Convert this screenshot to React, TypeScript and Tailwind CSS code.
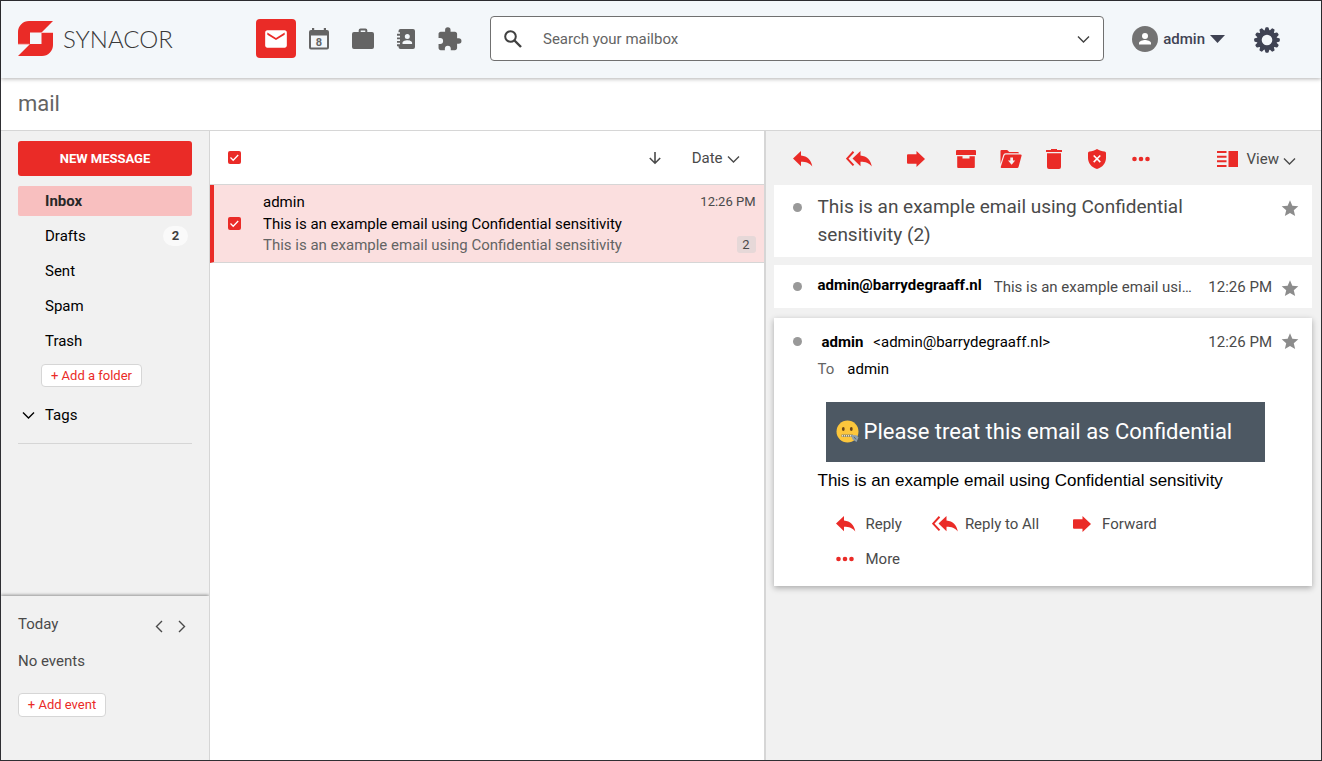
import { useState } from "react";
import type { ReactNode } from "react";
import { MdEmail, MdStar } from "react-icons/md";

const RED = "#ea2b27";

function LogoMark() {
  return (
    <svg width="35" height="35" viewBox="0 0 35 35" aria-hidden="true">
      <path
        fill={RED}
        fillRule="evenodd"
        d="M11 0H35L23.5 11.5H35V24A11 11 0 0 1 24 35H0L11.500 23.500H0V11A11 11 0 0 1 11 0ZM12 11.500V23H23.500V11.500Z"
      />
      <path d="M23.500 11.500H35M0 23.300H11.500" stroke="#fbd5d4" strokeWidth=".8" />
    </svg>
  );
}

function CalendarIcon() {
  return (
    <svg width="22" height="24" viewBox="0 0 22 24" aria-hidden="true">
      <path
        fill="#646464"
        fillRule="evenodd"
        d="M4 1h2.200v2h9.600V1H18v2h1a2 2 0 0 1 2 2v15.500a2 2 0 0 1-2 2H3a2 2 0 0 1-2-2V5a2 2 0 0 1 2-2h1ZM3 8.500v12h16v-12Z"
      />
      <text x="11" y="18.500" textAnchor="middle" fontFamily="Roboto, sans-serif" fontWeight="700" fontSize="11" fill="#646464">
        8
      </text>
    </svg>
  );
}

function BriefcaseIcon() {
  return (
    <svg width="24" height="24" viewBox="0 0 24 24" aria-hidden="true">
      <path
        fill="#646464"
        fillRule="evenodd"
        d="M9.500 1.500h5A1.800 1.800 0 0 1 16.300 3.300V5H21a2 2 0 0 1 2 2v13a2 2 0 0 1-2 2H3a2 2 0 0 1-2-2V7a2 2 0 0 1 2-2h4.700V3.300A1.800 1.800 0 0 1 9.500 1.500ZM9.700 3.500V5h4.600V3.500Z"
      />
    </svg>
  );
}

function ContactsIcon() {
  return (
    <svg width="20" height="22" viewBox="0 0 20 22" aria-hidden="true">
      <path
        fill="#646464"
        fillRule="evenodd"
        d="M4.500 1H17a2 2 0 0 1 2 2v16a2 2 0 0 1-2 2H4.500a2 2 0 0 1-2-2v-.8H1v-1.900h3v-1.500H1v-1.900h3v-1.600H1V9.400h3V7.700H1V5.800h3V4.300H2.500V3a2 2 0 0 1 2-2ZM11.300 6a2.500 2.500 0 1 0 0 5 2.500 2.500 0 0 0 0-5ZM6.500 16h9.600v-1.200c0-1.700-2.800-2.600-4.800-2.600s-4.800.9-4.800 2.600Z"
      />
    </svg>
  );
}

function PuzzleIcon() {
  return (
    <svg width="24" height="24" viewBox="1.500 0.700 22 22" aria-hidden="true">
      <path
        fill="#646464"
        d="M20.500 11H19V7c0-1.100-.9-2-2-2h-4V3.500a2.500 2.500 0 0 0-5 0V5H4c-1.100 0-2 .9-2 2v3.800h1.500a2.700 2.700 0 0 1 0 5.400H2V20c0 1.100.9 2 2 2h3.800v-1.500a2.700 2.700 0 0 1 5.400 0V22H17c1.100 0 2-.9 2-2v-4h1.500a2.500 2.500 0 0 0 0-5Z"
      />
    </svg>
  );
}

function SearchIcon() {
  return (
    <svg width="20" height="20" viewBox="0 0 20 20" fill="none" stroke="#404040" aria-hidden="true">
      <circle cx="7.500" cy="7.500" r="5.300" strokeWidth="2" />
      <path d="m11.500 11.500 6.500 6.500" strokeWidth="2.400" />
    </svg>
  );
}

function GearIcon() {
  const teeth = Array.from({ length: 12 }, (_, i) => i * 30);
  return (
    <svg width="26" height="26" viewBox="-13 -13 26 26" aria-hidden="true">
      <circle r="7.700" fill="none" stroke="#3f4353" strokeWidth="4.800" />
      {teeth.map((a) => (
        <path key={a} d="M-2.500-9-1.700-12.100Q-1.500-12.800-.8-12.800H.8Q1.500-12.800 1.700-12.100L2.500-9Z" fill="#3f4353" transform={`rotate(${a})`} />
      ))}
    </svg>
  );
}

function Chevron({ dir = "down", className = "" }: { dir?: "down" | "left" | "right"; className?: string }) {
  const d = { down: "M1 3.500 6.500 9 12 3.500", left: "M9 1 3.500 6.500 9 12", right: "M4 1l5.500 5.500L4 12" }[dir];
  return (
    <svg width="13" height="13" viewBox="0 0 13 13" fill="none" stroke="currentColor" strokeWidth="1.400" className={className} aria-hidden="true">
      <path d={d} />
    </svg>
  );
}

const replyPath = "M8 0v4.600c6.500.6 10 4.500 11.300 10.900C16.600 11.900 13 10.700 8 10.700v4.600L0 7.600Z";

function ReplyIcon() {
  return (
    <svg width="20" height="16" viewBox="0 0 20 16" fill={RED} aria-hidden="true">
      <path d={replyPath} />
    </svg>
  );
}

function ReplyAllIcon() {
  return (
    <svg width="26" height="16" viewBox="0 0 26 16" aria-hidden="true">
      <path d={replyPath} fill={RED} transform="translate(6.500 0)" />
      <path d="M7.500.8 1.200 7.600l6.300 6.800" fill="none" stroke={RED} strokeWidth="2" />
    </svg>
  );
}

function ForwardIcon() {
  return (
    <svg width="18" height="16" viewBox="0 0 18 16" fill={RED} aria-hidden="true">
      <path d="M1 3.200h8.500V0L18 8l-8.500 8v-3.200H1a1 1 0 0 1-1-1V4.200a1 1 0 0 1 1-1Z" />
    </svg>
  );
}

function ArchiveIcon() {
  return (
    <svg width="20" height="18" viewBox="0 0 20 18" fill={RED} aria-hidden="true">
      <path d="M1 0h18a1 1 0 0 1 1 1v4H0V1a1 1 0 0 1 1-1ZM1.200 6.300h5.300v2.200h7V6.300h5.300V17a1 1 0 0 1-1 1H2.200a1 1 0 0 1-1-1Z" />
    </svg>
  );
}

function MoveIcon() {
  return (
    <svg width="22" height="18" viewBox="0 0 22 18" fill={RED} aria-hidden="true">
      <path d="M1.500 0h5.700l2 2H17.500A1.500 1.500 0 0 1 19 3.300H5.500a2.300 2.300 0 0 0-2.200 1.600L.5 14V1A1 1 0 0 1 1.500 0Z" />
      <path
        fillRule="evenodd"
        d="M5.800 4.500h14.500a1.200 1.200 0 0 1 1.200 1.600L18.600 16.800a1.600 1.600 0 0 1-1.500 1.200H1.800a1 1 0 0 1-1-1.300L4.400 5.500a1.500 1.500 0 0 1 1.400-1ZM10.300 7.500v3H8l3.600 4.300 3.600-4.300H13v-3Z"
      />
    </svg>
  );
}

function TrashIcon() {
  return (
    <svg width="16" height="20" viewBox="0 0 16 20" fill={RED} aria-hidden="true">
      <path d="M5 0h6v1h5v2H0V1h5ZM1 4.300h14V18a2 2 0 0 1-2 2H3a2 2 0 0 1-2-2Z" />
    </svg>
  );
}

function SpamIcon() {
  return (
    <svg width="18" height="20" viewBox="0 0 18 20" aria-hidden="true">
      <path fill={RED} d="M9 0c2.500 1.600 5 2.300 7.500 2.500A1.500 1.500 0 0 1 18 4v5c0 5-3.500 9.500-9 11-5.500-1.500-9-6-9-11V4a1.500 1.500 0 0 1 1.500-1.500C4 2.300 6.500 1.600 9 0Z" />
      <path d="m5.700 6.500 6.600 6.600m0-6.600-6.600 6.600" stroke="#fff" strokeWidth="1.600" />
    </svg>
  );
}

function DotsIcon() {
  return (
    <svg width="18" height="6" viewBox="0 0 18 6" fill={RED} aria-hidden="true">
      <circle cx="2.500" cy="3" r="2.300" />
      <circle cx="9" cy="3" r="2.300" />
      <circle cx="15.500" cy="3" r="2.300" />
    </svg>
  );
}

function ViewIcon() {
  return (
    <svg width="21" height="16" viewBox="0 0 21 16" fill={RED} aria-hidden="true">
      <path d="M0 0h9.500v2H0zM0 4.700h9.500v2H0zM0 9.300h9.500v2H0zM0 14h9.500v2H0zM11.500 0H21v16h-9.500z" />
    </svg>
  );
}

function ZipperFace() {
  return (
    <svg width="24" height="24" viewBox="0 0 24 24" role="img" aria-label="Zipper-mouth face">
      <circle cx="11.500" cy="11.500" r="11" fill="#fcc63c" />
      <ellipse cx="7.300" cy="9" rx="1.400" ry="2" fill="#6b4518" />
      <ellipse cx="15.300" cy="9" rx="1.400" ry="2" fill="#6b4518" />
      <path d="M5.500 15.700H17" stroke="#8b8468" strokeWidth="2.400" />
      <path d="M6 15.700H17" stroke="#e3e0cf" strokeWidth="1.500" strokeDasharray="1 1" />
      <path d="m15 15 5.500.3 2 2.200-2 4.500-4-2.800Z" fill="#8fa0ad" />
      <path d="m18 16.800 2 2.600" stroke="#55626d" strokeWidth=".9" />
    </svg>
  );
}

function Check({ label }: { label: string }) {
  return (
    <span className="relative block size-[13px] shrink-0">
      <input type="checkbox" defaultChecked aria-label={label} className="block size-[13px] appearance-none rounded-xs bg-[#ea2b27]" />
      <svg className="pointer-events-none absolute inset-0" width="13" height="13" viewBox="0 0 13 13" fill="none" stroke="#fff" strokeWidth="1.300" aria-hidden="true">
        <path d="m2.500 6.500 2.700 2.700 5-5.200" />
      </svg>
    </span>
  );
}

function IconButton({ label, className, children }: { label: string; className: string; children: ReactNode }) {
  return (
    <button type="button" aria-label={label} className={`flex shrink-0 items-center justify-center ${className}`}>
      {children}
    </button>
  );
}

function Star({ label }: { label: string }) {
  return (
    <IconButton label={label} className="size-5 text-[#8c8c8c]">
      <MdStar size={21} />
    </IconButton>
  );
}

function Dot() {
  return <span className="size-[9px] shrink-0 rounded-full bg-[#999]" />;
}

function Header() {
  return (
    <header className="relative flex h-[77px] shrink-0 items-center bg-[#f3f7fa] pb-[2px] shadow-[0_1px_4px_rgba(0,0,0,0.3)]">
      <a href="#home" className="ml-[17px] flex w-[238px] shrink-0 items-center gap-[10px] font-[Lato,sans-serif] text-2xl font-light text-[#3a3a3a]">
        <LogoMark />
        <span>SYNACOR</span>
      </a>
      <nav className="flex shrink-0 items-center">
        <IconButton label="Mail" className="h-[39px] w-10 rounded bg-[#ea2b27] text-white">
          <MdEmail size={26} />
        </IconButton>
        <IconButton label="Calendar" className="h-10 w-[46px]">
          <CalendarIcon />
        </IconButton>
        <IconButton label="Briefcase" className="h-10 w-[42px]">
          <BriefcaseIcon />
        </IconButton>
        <IconButton label="Contacts" className="h-10 w-11">
          <ContactsIcon />
        </IconButton>
        <IconButton label="Apps" className="h-10 w-11">
          <PuzzleIcon />
        </IconButton>
      </nav>
      <form className="ml-[18px] flex h-[45px] flex-1 items-center rounded border border-[#707070] bg-white pr-3 pl-3" role="search">
        <SearchIcon />
        <input type="search" aria-label="Search your mailbox" placeholder="Search your mailbox" className="ml-5 min-w-0 flex-1 text-[15px] text-[#404040] outline-none placeholder:text-[#646464]" />
        <IconButton label="Search options" className="size-4 pt-[2px] text-[#404040]">
          <Chevron />
        </IconButton>
      </form>
      <button type="button" className="ml-7 flex shrink-0 items-center gap-[5px] text-[15px] font-medium text-[#3f4353]">
        <svg width="26" height="26" viewBox="0 0 26 26" aria-hidden="true">
          <circle cx="13" cy="13" r="13" fill="#737373" />
          <circle cx="13" cy="10" r="3" fill="#fff" />
          <path d="M7 18.500V17c0-2 4-3 6-3s6 1 6 3v1.500Z" fill="#fff" />
        </svg>
        admin
        <svg width="15" height="8" viewBox="0 0 15 8" fill="#3f4353" aria-hidden="true">
          <path d="M0 0h15L7.500 8Z" />
        </svg>
      </button>
      <IconButton label="Settings" className="mr-10 ml-7 size-7 pt-[2px]">
        <GearIcon />
      </IconButton>
    </header>
  );
}

const folders = [
  { name: "Inbox", count: 0 },
  { name: "Drafts", count: 2 },
  { name: "Sent", count: 0 },
  { name: "Spam", count: 0 },
  { name: "Trash", count: 0 },
];

function Sidebar() {
  const [active, setActive] = useState("Inbox");
  return (
    <aside className="flex w-[209px] shrink-0 flex-col border-r border-[#d6d6d6] bg-[#f1f1f1]">
      <div className="flex flex-1 flex-col px-[17px] pt-[10px]">
        <button type="button" className="h-[35px] rounded-[3px] bg-[#ea2b27] text-[13px] font-bold text-white">
          NEW MESSAGE
        </button>
        <ul className="mt-[10px] flex flex-col gap-[5px]">
          {folders.map((f) => (
            <li key={f.name}>
              <button
                type="button"
                onClick={() => setActive(f.name)}
                className={`flex h-[30px] w-full items-center justify-between rounded-xs pr-1 pl-[27px] ${
                  active === f.name ? "bg-[#f8bfbf] font-bold text-[#282828]" : "text-black"
                }`}
              >
                {f.name}
                {f.count > 0 && (
                  <span className="flex h-5 w-[25px] items-center justify-center rounded-full bg-[#fafafa] text-[13px] font-bold text-[#404040]">
                    {f.count}
                  </span>
                )}
              </button>
            </li>
          ))}
        </ul>
        <button type="button" className="mt-2 ml-[23px] h-[23px] w-[101px] rounded border border-[#d6d6d6] bg-white text-[13px] text-[#ea2b27]">
          + Add a folder
        </button>
        <button type="button" className="mt-4 flex h-6 items-center gap-[10px] pl-1 text-black">
          <Chevron />
          Tags
        </button>
        <hr className="mt-4 border-[#d6d6d6]" />
      </div>
      <section className="h-[164px] shrink-0 px-[17px] pt-4 text-[#4a4a4a] shadow-[0_-1px_3px_rgba(0,0,0,0.4)] [clip-path:inset(-5px_0_0_0)]">
        <div className="flex h-6 items-center justify-between">
          <h2>Today</h2>
          <div className="flex gap-2 pt-1">
            <IconButton label="Previous day" className="w-[14px]">
              <Chevron dir="left" />
            </IconButton>
            <IconButton label="Next day" className="mr-1 w-[14px]">
              <Chevron dir="right" />
            </IconButton>
          </div>
        </div>
        <p className="mt-[13px] leading-6">No events</p>
        <button type="button" className="mt-5 h-6 w-[88px] rounded border border-[#d6d6d6] bg-white text-[13px] text-[#ea2b27]">
          + Add event
        </button>
      </section>
    </aside>
  );
}

function MessageList() {
  return (
    <section className="flex min-w-0 flex-col border-r-2 border-[#d6d6d6] bg-white">
      <div className="flex h-[54px] items-center border-b border-[#d6d6d6] pr-6 pl-[18px] text-[#4a4a4a]">
        <Check label="Select all" />
        <IconButton label="Reverse order" className="ml-auto size-4">
          <svg width="14" height="14" viewBox="0 0 14 14" fill="none" stroke="currentColor" strokeWidth="1.600" aria-hidden="true">
            <path d="M7 1v11M1.800 7 7 12.200 12.200 7" />
          </svg>
        </IconButton>
        <button type="button" className="ml-[29px] flex items-center gap-1">
          Date
          <Chevron className="mt-1" />
        </button>
      </div>
      <article className="flex h-[78px] items-center border-b border-l-4 border-b-[#d6d6d6] border-l-[#ea2b27] bg-[#fbdfdf] pr-2 pl-[14px]">
        <Check label="Select message" />
        <div className="ml-[22px] min-w-0 flex-1 pb-[2px]">
          <div className="flex h-[22px] items-center justify-between text-black">
            admin
            <time className="text-[13px] text-[#4a4a4a]">12:26 PM</time>
          </div>
          <p className="truncate leading-[22px] text-black">This is an example email using Confidential sensitivity</p>
          <div className="flex h-5 items-center justify-between text-[#646464]">
            <p className="truncate">This is an example email using Confidential sensitivity</p>
            <span className="flex h-[17px] w-[19px] items-center justify-center rounded-[3px] bg-[#e6d8d8] text-[13px] text-[#4a4a4a]">2</span>
          </div>
        </div>
      </article>
    </section>
  );
}

function Reader() {
  return (
    <section className="min-w-0 bg-[#f1f1f1] pr-[9px] pl-2 text-[#4a4a4a]">
      <div className="flex h-[54px] items-center pt-[2px] pr-4 pl-[18px]">
        <IconButton label="Reply" className="w-[22px]"><ReplyIcon /></IconButton>
        <IconButton label="Reply to all" className="ml-8 w-[26px]"><ReplyAllIcon /></IconButton>
        <IconButton label="Forward" className="ml-[35px] w-[18px]"><ForwardIcon /></IconButton>
        <IconButton label="Archive" className="ml-[31px] w-5"><ArchiveIcon /></IconButton>
        <IconButton label="Move to folder" className="ml-6 w-[22px]"><MoveIcon /></IconButton>
        <IconButton label="Delete" className="ml-6 w-4"><TrashIcon /></IconButton>
        <IconButton label="Mark as spam" className="ml-[26px] w-[18px]"><SpamIcon /></IconButton>
        <IconButton label="More actions" className="ml-[26px] w-[18px]"><DotsIcon /></IconButton>
        <button type="button" className="ml-auto flex items-center gap-[9px]">
          <ViewIcon />
          <span className="flex items-center gap-1">
            View
            <Chevron className="mt-1" />
          </span>
        </button>
      </div>
      <div className="flex h-[72px] gap-4 bg-white pr-3 pl-[19px]">
        <span className="flex h-11 items-center"><Dot /></span>
        <h1 className="flex-1 pt-2 text-[19px] leading-7">This is an example email using Confidential sensitivity (2)</h1>
        <span className="flex h-[47px] items-center"><Star label="Star conversation" /></span>
      </div>
      <article className="mt-2 flex h-[43px] items-center bg-white pr-3 pl-[19px]">
        <Dot />
        <b className="ml-4 pb-1 text-black">admin@barrydegraaff.nl</b>
        <p className="ml-3 min-w-0 flex-1 truncate">This is an example email using Confidential sensitivity</p>
        <time className="ml-4">12:26 PM</time>
        <span className="ml-2 pt-1"><Star label="Star first message" /></span>
      </article>
      <article className="mt-[10px] bg-white py-[10px] shadow-[0_2px_6px_rgba(0,0,0,0.3)]">
        <div className="flex h-[27px] items-center pr-3 pl-[19px]">
          <Dot />
          <b className="ml-5 text-black">admin</b>
          <span className="ml-[10px] flex-1 truncate text-black">&lt;admin@barrydegraaff.nl&gt;</span>
          <time>12:26 PM</time>
          <span className="ml-2"><Star label="Star second message" /></span>
        </div>
        <p className="ml-11 flex h-[27px] items-center gap-[13px] text-[#646464]">
          To <span className="text-black">admin</span>
        </p>
        <div className="mt-5 mr-[47px] ml-[52px] flex h-[60px] items-center gap-1 bg-[#4d5863] pl-[10px] text-[22px] whitespace-nowrap text-white">
          <ZipperFace />
          Please treat this email as Confidential
        </div>
        <p className="ml-11 pt-[5px] font-['Liberation_Sans',Arial,sans-serif] text-[17px] leading-7 text-black">This is an example email using Confidential sensitivity</p>
        <div className="mt-[11px] ml-[62px] flex flex-wrap pr-20">
          <button type="button" className="mr-[30px] flex h-[35px] items-center gap-[10px]"><ReplyIcon />Reply</button>
          <button type="button" className="mr-[34px] flex h-[35px] items-center gap-[7px]"><ReplyAllIcon />Reply to All</button>
          <button type="button" className="mr-16 flex h-[35px] items-center gap-[11px]"><ForwardIcon />Forward</button>
          <button type="button" className="flex h-[35px] items-center gap-3"><DotsIcon />More</button>
        </div>
      </article>
    </section>
  );
}

export default function App() {
  return (
    <div className="flex min-h-screen flex-col border border-[#2f2f33] bg-white font-[Roboto,sans-serif] text-[15px] leading-5">
      <Header />
      <div className="flex h-[53px] shrink-0 items-center border-b border-[#d6d6d6] pl-[17px] text-[22px] text-[#646464]">mail</div>
      <main className="flex flex-1">
        <Sidebar />
        <div className="grid min-w-0 flex-1 grid-cols-2">
          <MessageList />
          <Reader />
        </div>
      </main>
    </div>
  );
}
